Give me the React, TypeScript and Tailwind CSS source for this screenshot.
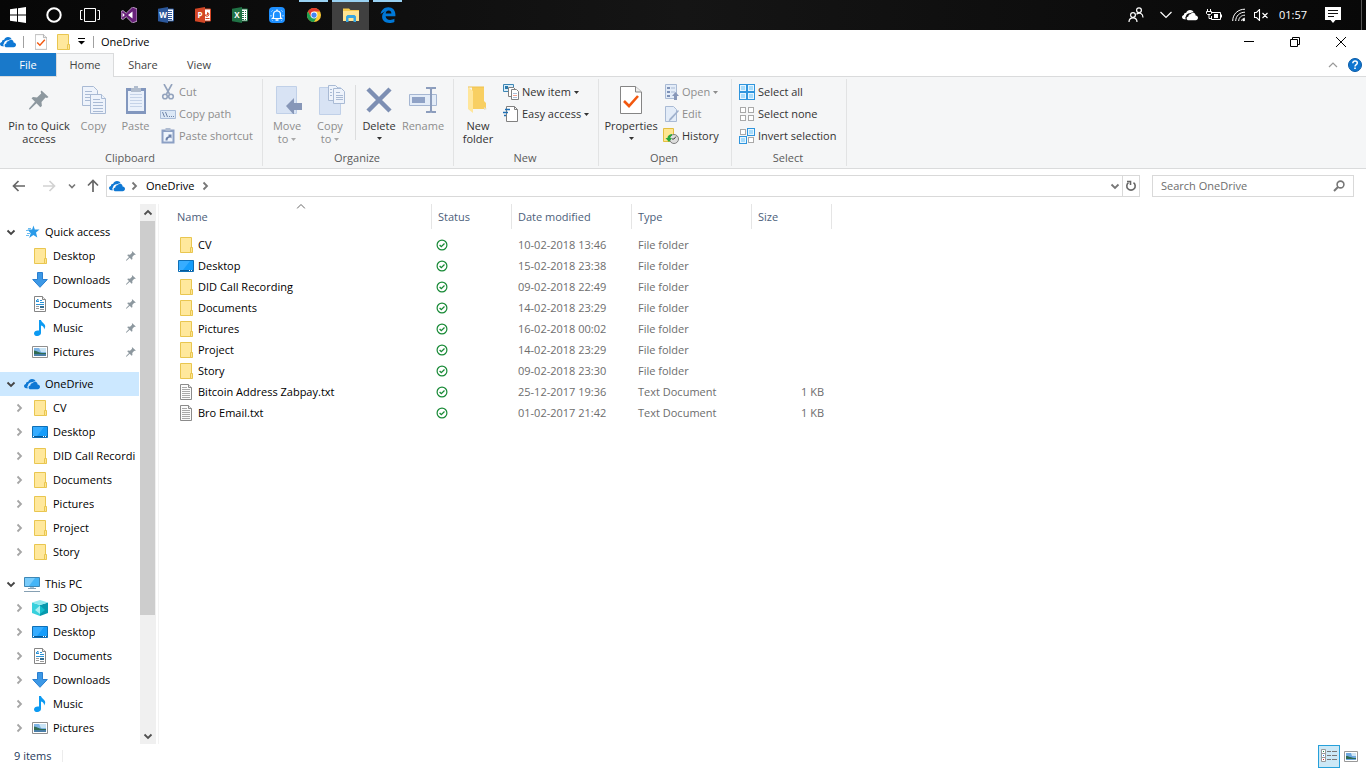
import type { ReactNode } from "react";

type IconProps = { className?: string };

/* ---------- shared icons ---------- */

function FolderIcon() {
  return (
    <svg width="16" height="16" viewBox="0 0 16 16" className="shrink-0">
      <path d="M2.5.5h11v10h.5v5H2.5z" fill="#ffe591" stroke="#e9c650" />
      <path d="M3 1h10v14H3z" fill="#ffe89c" />
      <path d="M12.5 10.5h2v5h-2z" fill="#ffe591" stroke="#e9c650" />
    </svg>
  );
}

function DesktopIcon() {
  return (
    <svg width="16" height="16" viewBox="0 0 16 16" className="shrink-0">
      <path d="M.5 2.5h15v11H.5z" fill="#159dfb" stroke="#0f6fb5" />
      <path d="M1 3h11L5 12H1z" fill="#37adff" />
      <path d="M1 12h14v1H1z" fill="#075a99" />
      <path d="M1 12h1v1H1zM11 12h1v1h-1zM13 12h1v1h-1z" fill="#fff" />
    </svg>
  );
}

function TextFileIcon() {
  return (
    <svg width="16" height="16" viewBox="0 0 16 16" className="shrink-0">
      <path d="M2.5.5h8l3 3v12h-11z" fill="#fbfbfb" stroke="#8b8b8b" />
      <path d="M10.5.5v3h3" fill="#e5e5e5" stroke="#8b8b8b" />
      <path d="M4 3.5h5M4 5.5h8M4 7.5h8M4 9.5h8M4 11.5h8M4 13.5h8" stroke="#a9a9a9" />
    </svg>
  );
}

function DocumentIcon() {
  return (
    <svg width="16" height="16" viewBox="0 0 16 16" className="shrink-0">
      <path d="M2.5.5h8l3 3v12h-11z" fill="#fff" stroke="#858585" />
      <path d="M10.5.5v3h3" fill="#eee" stroke="#858585" />
      <path d="M4 5.500h3M8 4.500h2M8 6.500h4M4 8.500h8" stroke="#2c93d6" />
      <path d="M4 5l2-2v3" stroke="#2c93d6" fill="none" />
      <path d="M4 10.500h3M4 12.500h3M8 13.500h4" stroke="#9a9a9a" />
      <path d="M8 10h4v2H8z" fill="#346d91" />
    </svg>
  );
}

function DownloadIcon() {
  return (
    <svg width="16" height="16" viewBox="0 0 16 16" className="shrink-0">
      <path d="M5.5.5h5v7h4.800L8 15.300.7 7.500h4.800z" fill="#3c98e6" stroke="#2a7fd0" />
    </svg>
  );
}

function MusicIcon() {
  return (
    <svg width="16" height="16" viewBox="0 0 16 16" className="shrink-0">
      <path d="M7 0h2c.2 2.200 4.200 3.500 4.200 6.300 0 1.300-.6 2.300-1.200 3.200.3-2.200-.8-3.300-3-4V13c0 1.600-1.600 3-3.600 3C3.500 16 2 15 2 13.400c0-1.700 1.700-3 3.700-3 .5 0 .9.100 1.300.200z" fill="#0c9af2" />
    </svg>
  );
}

function PicturesIcon() {
  return (
    <svg width="16" height="16" viewBox="0 0 16 16" className="shrink-0">
      <path d="M.5 2.500h15v11H.5z" fill="#fff" stroke="#8f8f8f" />
      <path d="M2 4h12v8H2z" fill="#7fb5e6" />
      <path d="M7 4h7v4H9z" fill="#c9e4f5" />
      <path d="M2 6.500c3 .5 5 2 8 2.500h4v1H2z" fill="#2f6b52" />
      <path d="M2 10h12v2H2z" fill="#4a7fa8" />
    </svg>
  );
}

function CubeIcon() {
  return (
    <svg width="16" height="16" viewBox="0 0 16 16" className="shrink-0">
      <path d="M0 2.500L8 5v11l-8-3z" fill="#37d0dc" />
      <path d="M16 2.500L8 5v11l8-3z" fill="#0799ad" />
      <path d="M0 2.500L8 0l8 2.500L8 5z" fill="#8fe9ee" />
      <path d="M8 5.500l-5 4.500 5 4z" fill="#a9f0f2" />
      <path d="M8 5.500l5 4.500-5 4z" fill="#13bccb" />
    </svg>
  );
}

function ComputerIcon() {
  return (
    <svg width="16" height="16" viewBox="0 0 16 16" className="shrink-0">
      <path d="M.5 1.500h15v9H.5z" fill="#45b5f7" stroke="#3d87b5" />
      <path d="M1 2h10l-6 8H1z" fill="#7accfb" />
      <path d="M6 11h4v1.500H6z" fill="#a5c3d6" />
      <path d="M4 12.500h8M0 15.500h16" stroke="#86a0b3" />
    </svg>
  );
}

function StarIcon() {
  return (
    <svg width="16" height="16" viewBox="0 0 16 16" className="shrink-0">
      <path d="M9.500 1.500l1.300 4H15.500l-3.500 3 1.300 5-3.900-2.600L5.200 14l1.500-4.700L3.500 5.500h4.600z" fill="#2a9be9" />
      <path d="M4 4.500h3M2 6.500h3M3 9.500h3M2 11.500h3" stroke="#6cbcf0" />
    </svg>
  );
}

function CloudIcon({ className = "" }: IconProps) {
  return (
    <svg width="16" height="16" viewBox="0 0 16 16" className={`shrink-0 ${className}`} fill="currentColor">
      <path d="M4.300 12.300H2.200C.9 12.300 0 11.300 0 10.100c0-1.200.9-2 1.900-2.100C1.900 6.500 3 5.600 4.200 5.700 4.900 4 6.200 3 8 3c1.700 0 3 .9 3.600 2.300-1.200-.2-2.200.2-3 1C5.800 5.900 4.200 7.500 4.100 9.200c-1.100.8-1 2.300.2 3.100z" />
      <path d="M6.600 13.200c-1.200 0-2-.8-2-1.800s.8-1.800 1.700-1.800c0-1.600 1.100-2.700 2.500-2.700.6-1 1.600-1.400 2.500-1.200 1.500.2 2.300 1.400 2.300 2.800 1.500 0 2.400 1 2.400 2.300s-1 2.400-2.300 2.400z" />
    </svg>
  );
}

function PinIcon({ size = 12, className = "" }: IconProps & { size?: number }) {
  return (
    <svg width={size} height={size} viewBox="0 0 20 20" className={`shrink-0 ${className}`}>
      <path d="M12.500.5l7 6.500-1.500 1-1.500-.4-4 4.300.4 4-1.600 1.400-3.800-4L1 19.500l-1-.3.200-1L6 11.800 2.500 8.300 4 7l4 .4 4.200-4-.6-1.700z" fill="#8d989f" />
    </svg>
  );
}

function Chevron({ dir, className = "" }: { dir: "right" | "down" | "up"; className?: string }) {
  const d = { right: "M3.500 1.500L7 5 3.500 8.500", down: "M1.500 3.500L5 7l3.500-3.500", up: "M1.500 6.500L5 3l3.500 3.500" }[dir];
  return (
    <svg width="10" height="10" viewBox="0 0 10 10" fill="none" stroke="currentColor" strokeWidth="1.800" className={`shrink-0 ${className}`}>
      <path d={d} />
    </svg>
  );
}

function Caret() {
  return (
    <svg width="5" height="3" viewBox="0 0 5 3" fill="currentColor" className="shrink-0">
      <path d="M0 0h5L2.500 3z" />
    </svg>
  );
}

function SyncedIcon() {
  return (
    <svg width="12" height="12" viewBox="0 0 12 12" fill="none" stroke="#188a36" className="block">
      <circle cx="6" cy="6" r="4.900" strokeWidth="1.200" />
      <path d="M3.600 6l1.700 1.700 3.200-3.200" strokeWidth="1.300" />
    </svg>
  );
}

function PropertiesIcon({ className = "" }: IconProps) {
  return (
    <svg viewBox="0 0 22 28" className={`shrink-0 ${className}`}>
      <path d="M.5.5h15l6 5.500v21.500H.5z" fill="#fff" stroke="#858585" />
      <path d="M15.500.5V6h6" fill="#eee" stroke="#858585" />
      <path d="M4 15l5 5 9-10" fill="none" stroke="#f2580f" strokeWidth="2.600" />
    </svg>
  );
}

/* ---------- taskbar ---------- */

function OfficeIcon({ letter, color }: { letter: string; color: string }) {
  return (
    <svg width="16" height="16" viewBox="0 0 16 16">
      <path d="M9 2h6.500v12H9z" fill="#fff" stroke={color} />
      {letter === "P" ? (
        <path d="M10 8a2 2 0 1 0 2.500-2.500V8zM10.500 11.500h4" stroke={color} fill="none" />
      ) : (
        <path d="M10 4.500h4M10 6.500h4M10 8.500h4M10 10.500h4M10 12.500h4" stroke={color} />
      )}
      {letter === "X" && <path d="M12.500 3v10" stroke="#fff" />}
      <path d="M0 1.700L10 0v16L0 14.300z" fill={color} />
      <text x="5" y="11" textAnchor="middle" fontSize="8" fontWeight="700" fill="#fff">
        {letter}
      </text>
    </svg>
  );
}

const pinnedApps: { name: string; open?: boolean; active?: boolean; icon: ReactNode }[] = [
  {
    name: "Visual Studio",
    icon: (
      <svg width="16" height="16" viewBox="0 0 16 16">
        <path d="M11.500 0L16 1.800v12.400L11.500 16 5.200 9.800 2 12.500l-2-1v-7l2-1 3.200 2.700z" fill="#68217a" />
        <path d="M11.500 4.500v7L7 8zM1.600 5.800v4.400L3.800 8z" fill="#fff" />
        <path d="M11.500 0L16 1.800v12.400L11.500 16 5.200 9.800 2 12.500l-2-1v-7l2-1 3.200 2.700z" fill="none" stroke="#e6d3ec" strokeWidth=".7" />
      </svg>
    ),
  },
  { name: "Word", icon: <OfficeIcon letter="W" color="#2b579a" /> },
  { name: "PowerPoint", icon: <OfficeIcon letter="P" color="#d24625" /> },
  { name: "Excel", icon: <OfficeIcon letter="X" color="#207245" /> },
  {
    name: "Assistant",
    icon: (
      <svg width="16" height="16" viewBox="0 0 16 16" fill="none" stroke="#fff">
        <rect width="16" height="16" rx="4" fill="#1e90ff" stroke="none" />
        <path d="M4.500 10.500V7.500a3.500 3.500 0 0 1 7 0v3l1 1h-9z" strokeWidth="1.200" />
        <path d="M8 2.500V4M6.500 13h3" strokeWidth="1.400" />
        <path d="M2.500 4.500l1-1M12.500 3.500l1 1M2 8v1.500M14 8v1.500M3.500 13.500l-.7-.7M12.500 13.500l.7-.7" opacity=".8" />
      </svg>
    ),
  },
  {
    name: "Chrome",
    open: true,
    icon: (
      <svg width="14" height="14" viewBox="0 0 16 16">
        <circle cx="8" cy="8" r="8" fill="#fcc934" />
        <path d="M8 4h6.930A8 8 0 0 0 1.070 4l3.500 6z" fill="#e33b2e" />
        <path d="M1.070 4A8 8 0 0 0 8 16l3.460-6H4.540z" fill="#1e9e52" />
        <circle cx="8" cy="8" r="3.900" fill="#fff" />
        <circle cx="8" cy="8" r="3" fill="#4285f4" />
      </svg>
    ),
  },
  {
    name: "File Explorer",
    open: true,
    active: true,
    icon: (
      <svg width="16" height="16" viewBox="0 0 16 16">
        <path d="M0 1.500h6L7.500 3H16v11H0z" fill="#f5c84b" />
        <path d="M0 4h16v10H0z" fill="#ffe391" />
        <path d="M3 15V9.500L4.500 8h7L13 9.500V15h-2.500v-4h-5v4z" fill="#36a5e0" />
      </svg>
    ),
  },
  {
    name: "Edge",
    open: true,
    icon: (
      <svg width="16" height="16" viewBox="0 0 16 16">
        <path d="M.6 7.100C1.200 3 4.200.2 8.200.2c4.600 0 7.200 3.200 7.200 7.300v1.800H5.600c.1 2.500 2.200 3.600 4.500 3.600 1.600 0 3-.5 4.300-1.200v3.200c-1.500.8-3.200 1.100-5 1.100-4.500 0-7.300-2.600-7.300-6.200 0-2.600 1.500-4.700 3.600-5.700C4.200 4.500.6 7.100.6 7.100zM5.700 6.500h5.700c0-1.900-1-3-2.800-3-1.600 0-2.700 1.200-2.900 3z" fill="#0078d7" />
      </svg>
    ),
  },
];

function Taskbar() {
  return (
    <header className="flex h-[30px] shrink-0 items-center bg-linear-to-r from-[#070707] via-[#151515] to-[#080808] text-white">
      <button aria-label="Start" className="flex h-full w-9 items-center justify-center">
        <svg width="16" height="16" viewBox="0 0 16 16" fill="#fff">
          <path d="M0 2.300L7 1.300v6.200H0zM8 1.200L16 0v7.500H8zM0 8.500h7v6.200l-7-1zM8 8.500h8V16l-8-1.200z" />
        </svg>
      </button>
      <button aria-label="Cortana" className="flex h-full w-9 items-center justify-center">
        <svg width="16" height="16" viewBox="0 0 16 16" fill="none" stroke="#fff" strokeWidth="2">
          <circle cx="8" cy="8" r="6.700" />
        </svg>
      </button>
      <button aria-label="Task view" className="mr-0.5 flex h-full w-9 items-center justify-center">
        <svg width="20" height="14" viewBox="0 0 20 14" fill="none" stroke="#fff">
          <path d="M4.500.5h11v13h-11zM2.500 2.500h-2v9h2M17.500 2.500h2v9h-2" />
        </svg>
      </button>
      {pinnedApps.map((app) => (
        <button
          key={app.name}
          aria-label={app.name}
          className={`relative flex h-full w-[37px] items-center justify-center ${app.active ? "bg-[#404040]" : ""}`}
        >
          {app.open && <span className={`absolute top-0 h-0.5 bg-[#99d1f2] ${app.active ? "inset-x-0" : "inset-x-1"}`} />}
          {app.icon}
        </button>
      ))}

      <div className="ml-auto flex h-full items-center">
        <button aria-label="People" className="mr-4">
          <svg width="16" height="16" viewBox="0 0 16 16" fill="none" stroke="#fff" strokeWidth="1.200">
            <circle cx="11" cy="3.200" r="2.400" />
            <circle cx="5" cy="8" r="2.400" />
            <path d="M1 15c0-5.500 8-5.500 8 0M8.500 7.200c3-2.400 6.500-.6 6.500 3.300" />
          </svg>
        </button>
        <button aria-label="Show hidden icons" className="mr-2.5">
          <svg width="12" height="8" viewBox="0 0 12 8" fill="none" stroke="#fff" strokeWidth="1.200">
            <path d="M.5 1L6 6.500 11.500 1" />
          </svg>
        </button>
        <CloudIcon />
        <svg width="16" height="12" viewBox="0 0 16 12" fill="none" stroke="#fff" className="ml-2">
          <path d="M6 3.500h8.500v7h-9V7M15.500 5.500v3" />
          <path d="M8 5h4v4H8z" fill="#fff" stroke="none" />
          <path d="M1.500 0v2.500M4.500 0v2.500M.5 2.500h5v2l-1 1h-3l-1-1zM3 5.500V9.500h2" />
        </svg>
        <svg width="14" height="14" viewBox="0 0 14 14" fill="none" stroke="#fff" className="ml-2.5">
          <path d="M.7 13C.7 6 6 1.200 13 1.200M3.700 13c0-5 4-8.800 9.300-8.800M6.700 13c0-3.500 2.800-5.800 6.300-5.800M9.700 13c0-1.800 1.300-2.800 3.300-2.800" />
          <circle cx="11.800" cy="12" r="1.200" fill="#fff" stroke="none" />
        </svg>
        <svg width="15" height="12" viewBox="0 0 15 12" fill="none" stroke="#fff" className="ml-2">
          <path d="M.5 3.500h2l3-3v11l-3-3h-2zM8.500 4l5 5M13.500 4l-5 5" strokeWidth="1.100" />
        </svg>
        <time className="ml-2.5 w-7 text-[11px]">01:57</time>
        <button aria-label="Notifications" className="mr-5 ml-[18px]">
          <svg width="16" height="16" viewBox="0 0 16 16">
            <path d="M0 0h16v13h-5.500L8 16l-2.500-3H0z" fill="#fff" />
            <path d="M3 3.500h10M3 6.500h10M3 9.500h6" stroke="#111" />
          </svg>
        </button>
        <div className="mr-1 h-full w-px bg-[#555]" />
      </div>
    </header>
  );
}

/* ---------- title bar and tabs ---------- */

function TitleBar() {
  return (
    <div className="flex h-[23px] shrink-0 items-center">
      <CloudIcon className="text-[#0f78d4]" />
      <div className="ml-[7px] h-3 w-px bg-[#a0a0a0]" />
      <button aria-label="Properties" className="ml-[11px]">
        <PropertiesIcon className="h-4 w-3" />
      </button>
      <button aria-label="New folder" className="ml-2">
        <FolderIcon />
      </button>
      <button aria-label="Customize toolbar" className="ml-[7px] w-[7px]">
        <svg width="7" height="7" viewBox="0 0 7 7">
          <path d="M0 .5h7" stroke="#000" />
          <path d="M0 3h7L3.500 6.500z" />
        </svg>
      </button>
      <div className="ml-2 h-3 w-px bg-[#a0a0a0]" />
      <h1 className="ml-[7px]">OneDrive</h1>
      <div className="mr-0.5 ml-auto flex h-full items-center">
        <button aria-label="Minimize" className="flex h-full w-[46px] items-center justify-center">
          <svg width="10" height="10" viewBox="0 0 10 10" stroke="#000">
            <path d="M0 4.500h10" />
          </svg>
        </button>
        <button aria-label="Restore" className="flex h-full w-[46px] items-center justify-center">
          <svg width="10" height="10" viewBox="0 0 10 10" fill="none" stroke="#000">
            <path d="M.5 2.500h7v7h-7zM2.500 2V.5h7v7H8" />
          </svg>
        </button>
        <button aria-label="Close" className="flex h-full w-[46px] items-center justify-center">
          <svg width="10" height="10" viewBox="0 0 10 10" stroke="#000">
            <path d="M0 0l10 10M10 0L0 10" />
          </svg>
        </button>
      </div>
    </div>
  );
}

function Tabs() {
  return (
    <nav className="flex h-6 shrink-0 border-b border-[#dadbdc] text-[#444]">
      <button className="w-14 bg-[#1979ca] text-white">File</button>
      <button className="-mb-px w-[58px] border border-b-0 border-[#dadbdc] bg-[#f5f6f7] pb-0.5">Home</button>
      <button className="w-[58px]">Share</button>
      <button className="w-[54px]">View</button>
      <div className="mr-1 ml-auto flex items-center gap-2.5">
        <button aria-label="Minimize the ribbon" className="text-[#999]">
          <svg width="10" height="10" viewBox="0 0 10 10" fill="none" stroke="currentColor" strokeWidth="1.200" className="block">
            <path d="M1 7l4-4 4 4" />
          </svg>
        </button>
        <button aria-label="Help">
          <svg width="14" height="14" viewBox="0 0 14 14" className="block">
            <circle cx="7" cy="7" r="6.500" fill="#0f75d0" stroke="#0a5ba6" />
            <path d="M4.800 5.200c0-2.900 4.500-2.700 4.500-.2C9.300 6.700 7 6.600 7 8.500" fill="none" stroke="#fff" strokeWidth="1.500" />
            <path d="M6.200 9.500h1.600V11H6.200z" fill="#fff" />
          </svg>
        </button>
      </div>
    </nav>
  );
}

/* ---------- ribbon ---------- */

function RibbonGroup({ title, className, children }: { title: string; className: string; children: ReactNode }) {
  return (
    <section className={`flex flex-col border-r border-[#e2e3e4] ${className}`}>
      <div className="flex h-[73px] items-start pt-0.5">{children}</div>
      <h2 className="pr-0.5 text-center leading-4 text-[#5a5a5a]">{title}</h2>
    </section>
  );
}

function BigButton({ icon, className, disabled, children }: { icon: ReactNode; className: string; disabled?: boolean; children: ReactNode }) {
  return (
    <button disabled={disabled} className={`flex shrink-0 flex-col items-center ${disabled ? "text-[#8d8d8d]" : "text-[#333]"} ${className}`}>
      <span className="flex h-[38px] items-center justify-center">{icon}</span>
      <span className="text-center leading-[13px] whitespace-nowrap">{children}</span>
    </button>
  );
}

function SmallButton({ icon, disabled, caret, children }: { icon: ReactNode; disabled?: boolean; caret?: boolean; children: ReactNode }) {
  return (
    <button disabled={disabled} className={`flex h-[22px] items-center gap-[3px] whitespace-nowrap ${disabled ? "text-[#8d8d8d]" : "text-[#333]"}`}>
      {icon}
      {children}
      {caret && <Caret />}
    </button>
  );
}

function SelectIcon({ on }: { on: boolean[] }) {
  return (
    <svg width="16" height="16" viewBox="0 0 16 16" className="shrink-0">
      {on.map((filled, i) => {
        const x = (i % 2) * 8;
        const y = Math.floor(i / 2) * 8;
        return filled ? (
          <g key={i}>
            <rect x={x + 0.5} y={y + 0.5} width="7" height="7" fill="#e6f5ff" stroke="#2f95dd" />
            <rect x={x + 2} y={y + 2} width="4" height="4" fill="#a8dcfb" />
          </g>
        ) : (
          <rect key={i} x={x + 1.5} y={y + 1.5} width="5" height="5" fill="#fff" stroke="#a9a9a9" />
        );
      })}
    </svg>
  );
}

function Ribbon() {
  return (
    <div className="flex h-[92px] shrink-0 border-b border-[#dadbdc] bg-[#f5f6f7] pt-0.5 pb-0.5">
      <RibbonGroup title="Clipboard" className="w-[263px]">
        <BigButton className="ml-1 w-[70px]" icon={<PinIcon size={20} />}>
          Pin to Quick
          <br />
          access
        </BigButton>
        <BigButton
          disabled
          className="w-[39px]"
          icon={
            <svg width="24" height="28" viewBox="0 0 24 28" fill="#eef3fb" stroke="#a9bad4">
              <path d="M.5.5h11l4 4v15H.5z" />
              <path d="M3 5.500h7M3 8.500h9M3 11.500h9M3 14.500h9" />
              <path d="M8.500 8.500h11l4 4v15h-15z" />
              <path d="M19.500 8.500v4h4M11 13.500h7M11 16.500h10M11 19.500h10M11 22.500h10M11 25.500h10" />
            </svg>
          }
        >
          Copy
        </BigButton>
        <BigButton
          disabled
          className="w-[45px]"
          icon={
            <svg width="20" height="30" viewBox="0 0 20 30">
              <path d="M0 3h20v26H0z" fill="#8297be" />
              <path d="M2 6h16v20H2z" fill="#eaf1fb" />
              <path d="M4 9.500h12M4 12.500h12M4 15.500h12M4 18.500h12M4 21.500h12" stroke="#c5d3e8" />
              <path d="M5 3h3V1h4v2h3v4H5z" fill="#b1bdce" />
            </svg>
          }
        >
          Paste
        </BigButton>
        <div className="pl-0.5">
          <SmallButton
            disabled
            icon={
              <svg width="16" height="16" viewBox="0 0 16 16" fill="none" stroke="#93a3bd" strokeWidth="1.600">
                <path d="M4 0l5.500 10M12 0L6.500 10" />
                <circle cx="5" cy="12.500" r="2.300" />
                <circle cx="11" cy="12.500" r="2.300" />
              </svg>
            }
          >
            Cut
          </SmallButton>
          <SmallButton
            disabled
            icon={
              <svg width="16" height="16" viewBox="0 0 16 16" fill="none" stroke="#6f84a8">
                <path d="M.5 4.500h15v8H.5z" fill="#dce8f6" stroke="#a9bcd8" />
                <path d="M2.500 6l2 5M5.500 6l2 5M9 10.500h1M11 10.500h1M13 10.500h1" />
              </svg>
            }
          >
            Copy path
          </SmallButton>
          <SmallButton
            disabled
            icon={
              <svg width="16" height="16" viewBox="0 0 16 16">
                <path d="M1.500 1.500h13v14h-13z" fill="#8ca0c4" />
                <path d="M3.500 4h9v9.500h-9z" fill="#eef4fc" />
                <path d="M5.500 0h5v3h-5z" fill="#aebbd0" />
                <path d="M5.500 12.500c0-3 1-4 3-4V6.500h3v4l-1-1c-2 0-3 1-3 3z" fill="#6d82aa" />
              </svg>
            }
          >
            Paste shortcut
          </SmallButton>
        </div>
      </RibbonGroup>

      <RibbonGroup title="Organize" className="w-[191px]">
        <BigButton
          disabled
          className="ml-0.5 w-11"
          icon={
            <svg width="32" height="28" viewBox="-3 0 32 28">
              <path d="M2.500.5h20v27h-20z" fill="#d8e3f4" stroke="#c0d0e8" />
              <path d="M12 20l8-8v5h8v7h-8v5z" fill="#8797b8" />
            </svg>
          }
        >
          Move
          <br />
          to <span className="inline-flex pb-0.5 align-middle text-[#aaa]"><Caret /></span>
        </BigButton>
        <BigButton
          disabled
          className="w-[42px]"
          icon={
            <svg width="30" height="30" viewBox="-4 0 30 30" fill="#eef3fb" stroke="#a9bad4">
              <path d="M.5 2.500h21v27H.5z" fill="#d8e3f4" stroke="#c0d0e8" />
              <path d="M9.500.5h7l3 3v12h-10z" />
              <path d="M14.500 3.500h8l3 3v12h-11zM17 7.500h4M17 10.500h7M17 12.500h7M17 14.500h7M11 4.500h2M11 7.500h2M11 10.500h2" />
            </svg>
          }
        >
          Copy
          <br />
          to <span className="inline-flex pb-0.5 align-middle text-[#aaa]"><Caret /></span>
        </BigButton>
        <div className="mt-1 ml-1 h-[55px] w-px bg-[#dcddde]" />
        <BigButton
          className="ml-0.5 w-[42px]"
          icon={
            <svg width="26" height="26" viewBox="0 0 26 26" stroke="#7d8fb3" strokeWidth="4.500">
              <path d="M2 2l22 22M24 2L2 24" />
            </svg>
          }
        >
          Delete
          <br />
          <span className="inline-flex pb-1 align-middle"><Caret /></span>
        </BigButton>
        <BigButton
          disabled
          className="w-[46px]"
          icon={
            <svg width="28" height="28" viewBox="0 0 28 28" fill="none">
              <path d="M.5 8.500h27v11H.5z" fill="#e3ecf8" stroke="#a5b6d2" />
              <path d="M3 11h13v6H3z" fill="#8fa2c6" />
              <path d="M17 2h4l1 1 1-1h4M22 3v22M17 26h4l1-1 1 1h4" stroke="#8c9dbd" strokeWidth="2" />
            </svg>
          }
        >
          Rename
        </BigButton>
      </RibbonGroup>

      <RibbonGroup title="New" className="w-[145px]">
        <BigButton
          className="ml-0.5 w-11"
          icon={
            <svg width="20" height="28" viewBox="0 0 20 28">
              <path d="M4 1h12v14l2 2v6H4z" fill="#f8cf62" />
              <path d="M0 1l5 4v22l-5-4z" fill="#ffe69b" />
              <path d="M0 1h16" stroke="#efc24d" />
              <path d="M16 24l3-1-3-2z" fill="#e9dfc4" />
            </svg>
          }
        >
          New
          <br />
          folder
        </BigButton>
        <div className="pl-[3px]">
          <SmallButton
            caret
            icon={
              <svg width="16" height="16" viewBox="0 0 16 16">
                <path d="M.5.5h10v7H.5z" fill="#d8eefb" stroke="#3d86b5" />
                <path d="M2 2h3v3H2zM7 3h2v2H7z" fill="#2c79ab" />
                <path d="M5.500 3.500h5l2 2v7h-7z" fill="#fff" stroke="#808080" />
                <path d="M8.500 5.500h5l2 2v8h-7z" fill="#fff" stroke="#808080" />
                <path d="M10 9.500h4M10 13.500h4" stroke="#a9bdd8" />
                <path d="M10 11.500h4" stroke="#f0a090" />
              </svg>
            }
          >
            New item
          </SmallButton>
          <SmallButton
            caret
            icon={
              <svg width="16" height="16" viewBox="0 0 16 16">
                <path d="M3.500.5h8l3 3v12h-11z" fill="#fff" stroke="#808080" />
                <path d="M11.500.5v3h3" fill="none" stroke="#808080" />
                <path d="M2 3.500h5M0 6.500h5M1 9.500h2" stroke="#1e6fb4" strokeWidth="1.400" />
              </svg>
            }
          >
            Easy access
          </SmallButton>
        </div>
      </RibbonGroup>

      <RibbonGroup title="Open" className="w-[133px]">
        <BigButton className="ml-[3px] w-[58px]" icon={<PropertiesIcon className="h-[28px] w-[22px]" />}>
          Properties
          <br />
          <span className="inline-flex pb-1 align-middle"><Caret /></span>
        </BigButton>
        <div className="pl-[3px]">
          <SmallButton
            disabled
            caret
            icon={
              <svg width="16" height="16" viewBox="0 0 16 16">
                <path d="M2.500.5h11v14h-11z" fill="#e3ecf8" stroke="#a9bad4" />
                <path d="M4 3h3v2H4zM4 7h3v2H4zM4 11h3v2H4z" fill="#7f93b8" />
                <path d="M8 4h4M8 8h4" stroke="#a9bad4" />
                <path d="M12.500 8l3.500 4h-2v4h-3v-4H9z" fill="#8797b8" />
              </svg>
            }
          >
            Open
          </SmallButton>
          <SmallButton
            disabled
            icon={
              <svg width="16" height="16" viewBox="0 0 16 16">
                <path d="M2.500.5h8l3 3v12h-11z" fill="#e3ecf8" stroke="#a9bad4" />
                <path d="M15 4l1 1-8 9-2.500 1.500 1-2.800z" fill="#9fb0cc" />
              </svg>
            }
          >
            Edit
          </SmallButton>
          <SmallButton
            icon={
              <svg width="16" height="16" viewBox="0 0 16 16">
                <path d="M.5.5h10v13H.5z" fill="#ffe591" stroke="#e3bf3f" />
                <circle cx="11" cy="11" r="4.500" fill="#ddd" stroke="#7e7e7e" />
                <path d="M11 11l2-2.500M11 11H9" stroke="#444" />
                <path d="M9 6C6 6.500 4.500 8 4.500 10H2.500L6 14l3-4H7.200C7.200 8.800 7.800 8 9 7.500z" fill="#27a83a" />
              </svg>
            }
          >
            History
          </SmallButton>
        </div>
      </RibbonGroup>

      <RibbonGroup title="Select" className="w-[115px]">
        <div className="pl-[7px]">
          <SmallButton icon={<SelectIcon on={[true, true, true, true]} />}>Select all</SmallButton>
          <SmallButton icon={<SelectIcon on={[false, false, false, false]} />}>Select none</SmallButton>
          <SmallButton icon={<SelectIcon on={[false, true, true, false]} />}>Invert selection</SmallButton>
        </div>
      </RibbonGroup>
    </div>
  );
}

/* ---------- address bar ---------- */

function AddressRow() {
  return (
    <div className="flex h-[35px] shrink-0 items-center px-3 pb-0.5">
      <button aria-label="Back" className="w-7 text-[#666]">
        <svg width="14" height="12" viewBox="0 0 14 12" fill="none" stroke="currentColor" strokeWidth="1.700">
          <path d="M13 6H1.500M6.500 1l-5 5 5 5" />
        </svg>
      </button>
      <button aria-label="Forward" className="w-7 pl-0.5 text-[#d2d2d2]">
        <svg width="14" height="12" viewBox="0 0 14 12" fill="none" stroke="currentColor" strokeWidth="1.700">
          <path d="M1 6h11.500M7.500 1l5 5-5 5" />
        </svg>
      </button>
      <button aria-label="Recent locations" className="w-[19px] text-[#777]">
        <svg width="8" height="8" viewBox="0 0 8 8" fill="none" stroke="currentColor" strokeWidth="1.600">
          <path d="M1 2.500l3 3 3-3" />
        </svg>
      </button>
      <button aria-label="Up" className="w-[19px] text-[#666]">
        <svg width="12" height="13" viewBox="0 0 12 13" fill="none" stroke="currentColor" strokeWidth="1.700">
          <path d="M6 13V1.500M1 6.500l5-5 5 5" />
        </svg>
      </button>
      <div className="flex h-[22px] flex-1 items-center border border-[#d9d9d9]">
        <CloudIcon className="ml-0.5 text-[#0f78d4]" />
        <Chevron dir="right" className="ml-1 text-[#777]" />
        <button className="ml-[7px]">OneDrive</button>
        <Chevron dir="right" className="ml-1.5 text-[#777]" />
        <button aria-label="Previous locations" className="mr-0.5 ml-auto text-[#777]">
          <Chevron dir="down" />
        </button>
        <button aria-label="Refresh" className="flex h-full w-[17px] items-center justify-center border-l border-[#d9d9d9] text-[#666]">
          <svg width="12" height="12" viewBox="0 0 12 12" fill="none" stroke="currentColor" strokeWidth="1.600">
            <path d="M3.500 2.600a4.200 4.200 0 1 0 5 0" />
            <path d="M2 1.500h3.500V5" />
          </svg>
        </button>
      </div>
      <form role="search" className="ml-3 flex h-[22px] w-[202px] items-center border border-[#d9d9d9] pr-2 pl-2">
        <input aria-label="Search OneDrive" placeholder="Search OneDrive" className="min-w-0 flex-1 outline-none placeholder:text-[#6d6d6d]" />
        <svg width="12" height="12" viewBox="0 0 12 12" fill="none" stroke="#777" strokeWidth="1.600">
          <circle cx="7.500" cy="4.500" r="3.400" />
          <path d="M5 7L1 11" strokeWidth="2" />
        </svg>
      </form>
    </div>
  );
}

/* ---------- navigation pane ---------- */

type Node = { label: string; icon: ReactNode };
type Section = Node & { pinned?: boolean; selected?: boolean; children: Node[] };

const sections: Section[] = [
  {
    label: "Quick access",
    icon: <StarIcon />,
    pinned: true,
    children: [
      { label: "Desktop", icon: <FolderIcon /> },
      { label: "Downloads", icon: <DownloadIcon /> },
      { label: "Documents", icon: <DocumentIcon /> },
      { label: "Music", icon: <MusicIcon /> },
      { label: "Pictures", icon: <PicturesIcon /> },
    ],
  },
  {
    label: "OneDrive",
    icon: <CloudIcon className="text-[#0f78d4]" />,
    selected: true,
    children: [
      { label: "CV", icon: <FolderIcon /> },
      { label: "Desktop", icon: <DesktopIcon /> },
      { label: "DID Call Recording", icon: <FolderIcon /> },
      { label: "Documents", icon: <FolderIcon /> },
      { label: "Pictures", icon: <FolderIcon /> },
      { label: "Project", icon: <FolderIcon /> },
      { label: "Story", icon: <FolderIcon /> },
    ],
  },
  {
    label: "This PC",
    icon: <ComputerIcon />,
    children: [
      { label: "3D Objects", icon: <CubeIcon /> },
      { label: "Desktop", icon: <DesktopIcon /> },
      { label: "Documents", icon: <DocumentIcon /> },
      { label: "Downloads", icon: <DownloadIcon /> },
      { label: "Music", icon: <MusicIcon /> },
      { label: "Pictures", icon: <PicturesIcon /> },
    ],
  },
];

function Sidebar() {
  return (
    <aside className="flex w-[159px] shrink-0 border-r border-[#f3f3f3]">
      <nav className="flex min-w-0 flex-1 flex-col gap-2 overflow-hidden pt-4">
        {sections.map((section) => (
          <ul key={section.label}>
            <li>
              <button className={`flex h-6 w-[139px] items-center pl-1.5 ${section.selected ? "bg-[#cce8ff]" : ""}`}>
                <Chevron dir="down" className="mr-2 text-[#444]" />
                {section.icon}
                <span className="ml-[5px]">{section.label}</span>
              </button>
            </li>
            {section.children.map((node) => (
              <li key={node.label}>
                <button className={`flex h-6 w-[139px] items-center pl-3.5 ${section.pinned ? "pr-[3px]" : "pr-1"}`}>
                  <span className="w-[18px] shrink-0 text-[#a6a6a6]">{!section.pinned && <Chevron dir="right" />}</span>
                  {node.icon}
                  <span className="ml-[5px] min-w-0 overflow-hidden whitespace-nowrap">{node.label}</span>
                  {section.pinned && <PinIcon size={10} className="ml-auto" />}
                </button>
              </li>
            ))}
          </ul>
        ))}
      </nav>
      <div className="mr-0.5 flex w-4 flex-col bg-[#f0f0f0] text-[#505050]">
        <button aria-label="Scroll up" className="flex h-[17px] items-center justify-center">
          <Chevron dir="up" />
        </button>
        <div className="flex-1">
          <div className="h-7/9 w-[15px] bg-[#cdcdcd]" />
        </div>
        <button aria-label="Scroll down" className="flex h-[17px] items-center justify-center">
          <Chevron dir="down" />
        </button>
      </div>
    </aside>
  );
}

/* ---------- file list ---------- */

const files = [
  { name: "CV", icon: <FolderIcon />, date: "10-02-2018 13:46", type: "File folder", size: "" },
  { name: "Desktop", icon: <DesktopIcon />, date: "15-02-2018 23:38", type: "File folder", size: "" },
  { name: "DID Call Recording", icon: <FolderIcon />, date: "09-02-2018 22:49", type: "File folder", size: "" },
  { name: "Documents", icon: <FolderIcon />, date: "14-02-2018 23:29", type: "File folder", size: "" },
  { name: "Pictures", icon: <FolderIcon />, date: "16-02-2018 00:02", type: "File folder", size: "" },
  { name: "Project", icon: <FolderIcon />, date: "14-02-2018 23:29", type: "File folder", size: "" },
  { name: "Story", icon: <FolderIcon />, date: "09-02-2018 23:30", type: "File folder", size: "" },
  { name: "Bitcoin Address Zabpay.txt", icon: <TextFileIcon />, date: "25-12-2017 19:36", type: "Text Document", size: "1 KB" },
  { name: "Bro Email.txt", icon: <TextFileIcon />, date: "01-02-2017 21:42", type: "Text Document", size: "1 KB" },
];

const columns = [
  { label: "Name", width: "w-[261px]" },
  { label: "Status", width: "w-20" },
  { label: "Date modified", width: "w-[120px]" },
  { label: "Type", width: "w-[120px]" },
  { label: "Size", width: "w-20" },
];

function FileList() {
  return (
    <main className="flex-1 overflow-hidden pl-3">
      <table className="table-fixed border-collapse">
        <thead>
          <tr>
            {columns.map((col) => (
              <th key={col.label} className={`h-[30px] p-0 text-left align-top font-normal text-[#4c607a] ${col.width}`}>
                <div className="relative h-[25px] border-r border-[#e5e5e5] pl-1.5 leading-[25px]">
                  {col.label}
                  {col.label === "Name" && (
                    <svg width="9" height="5" viewBox="0 0 9 5" fill="none" stroke="#666" className="absolute top-0 left-1/2 -translate-x-1/2">
                      <path d="M.5 4.500l4-4 4 4" />
                    </svg>
                  )}
                </div>
              </th>
            ))}
          </tr>
        </thead>
        <tbody className="text-[#6d6d6d]">
          {files.map((file) => (
            <tr key={file.name} className="h-[21px]">
              <td className="p-0 pl-[7px]">
                <div className="flex items-center gap-1 text-black">
                  {file.icon}
                  {file.name}
                </div>
              </td>
              <td className="p-0 pl-1">
                <SyncedIcon />
              </td>
              <td className="p-0 pl-1.5">{file.date}</td>
              <td className="p-0 pl-1.5">{file.type}</td>
              <td className="p-0 pr-2 text-right">{file.size}</td>
            </tr>
          ))}
        </tbody>
      </table>
    </main>
  );
}

function StatusBar() {
  return (
    <footer className="flex h-6 shrink-0 items-center pl-3.5 text-[#1e395b]">
      <span className="w-12">9 items</span>
      <div className="h-3 w-px bg-[#ececec]" />
      <div className="mr-2 ml-auto flex items-center gap-1">
        <button aria-label="Details view" className="flex h-[23px] w-[22px] items-center justify-center border border-[#26a0da] bg-[#cce8f6]">
          <svg width="16" height="14" viewBox="0 0 16 14">
            <path d="M.5.5h4v4h-4zM.5 4.500h4v4h-4zM.5 8.500h4v4h-4z" fill="#fff" stroke="#999" />
            <path d="M2 2h1v1H2z" fill="#2a8a4a" />
            <path d="M2 6h1v1H2z" fill="#2b7de0" />
            <path d="M2 10h1v1H2z" fill="#d22" />
            <path d="M6 2.500h4M11 2.500h5M6 6.500h4M11 6.500h5M6 10.500h4M11 10.500h5" stroke="#777" />
          </svg>
        </button>
        <button aria-label="Large icons view">
          <svg width="14" height="11" viewBox="0 0 14 11" className="block">
            <path d="M.5.5h13v10H.5z" fill="#fff" stroke="#999" />
            <path d="M2 2h10v7H2z" fill="#6ea8e0" />
            <path d="M7 2h5v3H8z" fill="#cfe6f6" />
            <path d="M2 5c3 0 5 2 10 2v1H2z" fill="#2f6b52" />
          </svg>
        </button>
      </div>
    </footer>
  );
}

export default function App() {
  return (
    <div className="flex h-screen flex-col overflow-hidden bg-white font-['Open_Sans','Noto_Sans',sans-serif] text-[11px] leading-4 text-black">
      <Taskbar />
      <TitleBar />
      <Tabs />
      <Ribbon />
      <AddressRow />
      <div className="flex min-h-0 flex-1">
        <Sidebar />
        <FileList />
      </div>
      <StatusBar />
    </div>
  );
}
